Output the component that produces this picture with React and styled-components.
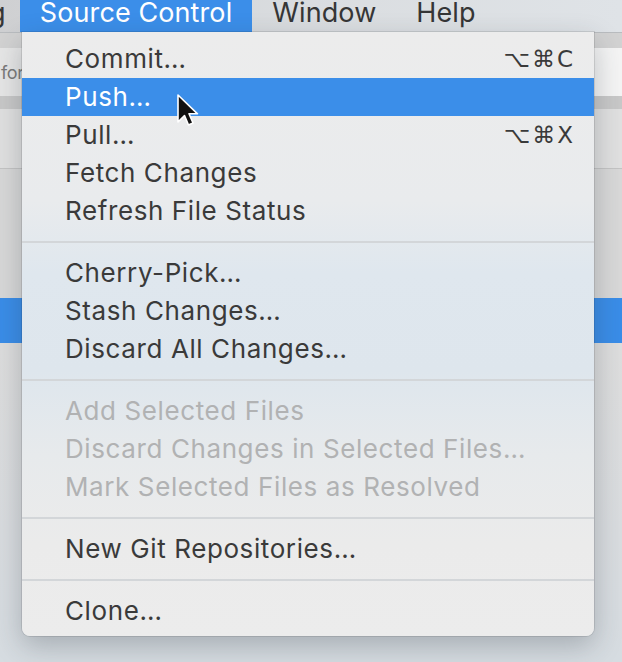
import React from "react";
import styled, { createGlobalStyle } from "styled-components";

const GlobalStyle = createGlobalStyle`
  html, body { margin: 0; padding: 0; }
  body {
    width: 622px;
    height: 662px;
    overflow: hidden;
    font-family: Inter, "Liberation Sans", "DejaVu Sans", sans-serif;
  }
`;

const Screen = styled.div`
  position: relative;
  width: 622px;
  height: 662px;
  overflow: hidden;
  display: flex;
  flex-direction: column;
  background: #dcdcdc;
`;

const MenuBar = styled.div`
  height: 32px;
  flex: none;
  display: flex;
  align-items: flex-start;
  background: linear-gradient(to right, #cfd0d2 0%, #dadde0 50%, #dfe3e7 100%);
`;

const BarItem = styled.div`
  height: 32px;
  padding: 0 ${(p) => (p.$hidden ? "14px" : "20px")} 0 20px;
  font-size: 27px;
  line-height: 25px;
  letter-spacing: 0.1px;
  color: ${(p) => (p.$active ? "#ffffff" : "#363636")};
  background: ${(p) => (p.$active ? "#3b8ee9" : "transparent")};
  white-space: nowrap;
  ${(p) => (p.$hidden ? "margin-left: -99px;" : "")}
`;

const Toolbar = styled.div`
  height: 15px;
  flex: none;
  background: #d2d2d2;
  border-top: 1px solid #b9bcbf;
`;

const SearchRow = styled.div`
  height: 48px;
  flex: none;
  display: flex;
  align-items: center;
  justify-content: space-between;
  background: #e6e6e6;
`;

const SearchHint = styled.span`
  font-size: 18px;
  letter-spacing: -0.3px;
  color: #7a7a7a;
  margin-left: 1px;
`;

const SearchField = styled.div`
  width: 40px;
  height: 48px;
  background: #f4f4f4;
`;

const Band = styled.div`
  height: 13px;
  flex: none;
  background: #c8c8c8;
`;

const ListRow = styled.div`
  flex: none;
  height: ${(p) => p.$h}px;
  background: ${(p) => (p.$selected ? "#3a8de8" : p.$bg || "#dadada")};
  border-bottom: ${(p) => (p.$line ? "1px solid #c4c4c4" : "none")};
`;

const Rest = styled.div`
  flex: 1;
  background: linear-gradient(to bottom, #dddddd 0%, #d9dcdf 60%, #d6dce1 100%);
`;

const Menu = styled.div`
  position: absolute;
  left: 22px;
  top: 32px;
  width: 572px;
  padding: 8px 0 6px;
  border-radius: 0 0 8px 8px;
  background: linear-gradient(
    to bottom,
    #ececec 0%,
    #e9ebed 28%,
    #dfe7ee 40%,
    #dee6ed 56%,
    #e7eaec 70%,
    #ebebeb 85%,
    #ececec 100%
  );
  box-shadow: 0 10px 28px rgba(40, 50, 60, 0.28), 0 0 0 1px rgba(0, 0, 0, 0.1);
`;

const Item = styled.div`
  height: 38px;
  display: flex;
  align-items: center;
  justify-content: space-between;
  padding: 0 19px 0 43px;
  font-size: 26px;
  line-height: 38px;
  letter-spacing: 0.6px;
  white-space: nowrap;
  color: ${(p) => (p.$disabled ? "#b1b2b3" : p.$active ? "#ffffff" : "#3a3a3a")};
  background: ${(p) => (p.$active ? "#3b8ee9" : "transparent")};
`;

const Shortcut = styled.span`
  font-family: "DejaVu Sans", sans-serif;
  font-size: 23px;
  letter-spacing: 2px;
`;

const Separator = styled.div`
  height: 24px;
  display: flex;
  align-items: center;
  &::after {
    content: "";
    flex: 1;
    height: 2px;
    background: #d3d6d9;
  }
`;

const Cursor = styled.svg`
  position: absolute;
  left: 176px;
  top: 93px;
`;

const groups = [
  [
    { label: "Commit…", key: "⌥⌘C" },
    { label: "Push…", active: true },
    { label: "Pull…", key: "⌥⌘X" },
    { label: "Fetch Changes" },
    { label: "Refresh File Status" },
  ],
  [
    { label: "Cherry-Pick…" },
    { label: "Stash Changes…" },
    { label: "Discard All Changes…" },
  ],
  [
    { label: "Add Selected Files", disabled: true },
    { label: "Discard Changes in Selected Files…", disabled: true },
    { label: "Mark Selected Files as Resolved", disabled: true },
  ],
  [{ label: "New Git Repositories…" }],
  [{ label: "Clone…" }],
];

export default function App() {
  return (
    <>
      <GlobalStyle />
      <Screen>
        <MenuBar>
          <BarItem $hidden>Debug</BarItem>
          <BarItem $active>Source Control</BarItem>
          <BarItem>Window</BarItem>
          <BarItem>Help</BarItem>
        </MenuBar>
        <Toolbar />
        <SearchRow>
          <SearchHint>for</SearchHint>
          <SearchField />
        </SearchRow>
        <Band />
        <ListRow $h={59} $bg="#e0e0e0" $line />
        <ListRow $h={129} $bg="#d8d8d8" />
        <ListRow $h={45} $selected />
        <Rest />

        <Menu>
          {groups.map((g, gi) => (
            <React.Fragment key={gi}>
              {gi > 0 && <Separator />}
              {g.map((it) => (
                <Item key={it.label} $active={it.active} $disabled={it.disabled}>
                  <span>{it.label}</span>
                  {it.key && <Shortcut>{it.key}</Shortcut>}
                </Item>
              ))}
            </React.Fragment>
          ))}
        </Menu>

        <Cursor width="24" height="38" viewBox="0 0 24 38">
          <path
            d="M2 2 L2 29 L8.5 22.5 L12.5 32 L17 30 L13 20.8 L21.5 20.8 Z"
            fill="#111"
            stroke="#fff"
            strokeWidth="1.6"
            strokeLinejoin="round"
          />
        </Cursor>
      </Screen>
    </>
  );
}
